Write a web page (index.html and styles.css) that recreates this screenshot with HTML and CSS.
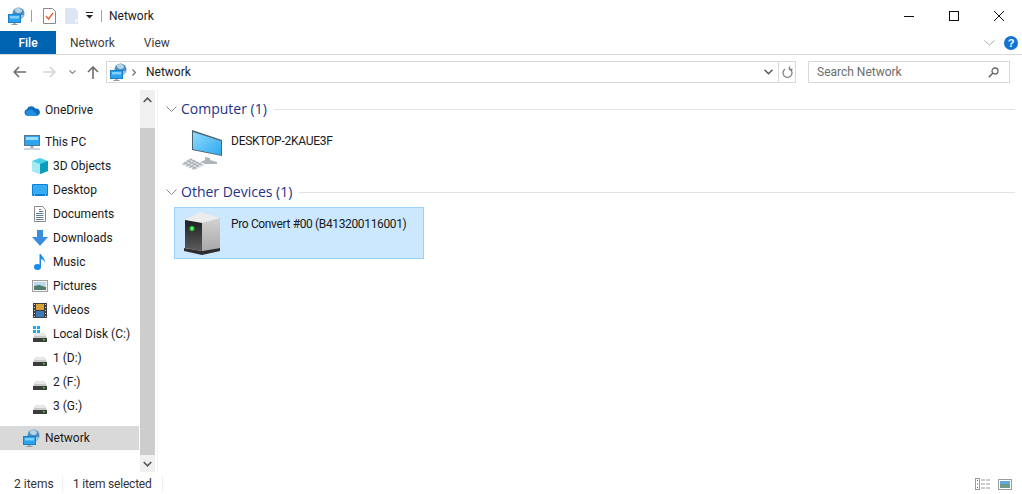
FILE: index.html
```html
<!DOCTYPE html>
<html lang="en">
<head>
<meta charset="utf-8">
<title>Network</title>
<link rel="stylesheet" href="styles.css">
</head>
<body>
<svg class="defs" width="0" height="0">
  <defs>
    <linearGradient id="screen" x1="0" y1="0" x2="1" y2="1">
      <stop offset="0" stop-color="#8fdcfc"/>
      <stop offset="1" stop-color="#2fa8f0"/>
    </linearGradient>
    <linearGradient id="front" x1="0" y1="0" x2="0" y2="1">
      <stop offset="0" stop-color="#1f1f1f"/>
      <stop offset="1" stop-color="#5c5c5c"/>
    </linearGradient>
    <linearGradient id="side" x1="0" y1="0" x2="0" y2="1">
      <stop offset="0" stop-color="#d2d2d2"/>
      <stop offset="1" stop-color="#a8a8a8"/>
    </linearGradient>
  </defs>
  <symbol id="net" viewBox="0 0 18 18">
    <circle cx="11.500" cy="6.500" r="6" fill="#4f8fbe"/>
    <path d="M8 2c2-1.500 5-1.500 6.500 .5s-1 3.500-3 3.500-4.500-2-3.500-4z" fill="#b5d4e8"/>
    <path d="M13 8c2 0 3.500-.5 4.500 .5-1 2.500-3 3.500-4.500 3z" fill="#9cc3dc"/>
    <rect x="1.500" y="7.500" width="12" height="8" fill="#2ba3ef" stroke="#1a7fc4"/>
    <rect x="3" y="9" width="9" height="2.500" fill="#7fd0fa"/>
    <rect x="6.500" y="16" width="2" height="1" fill="#8a9aa6"/>
    <rect x="4.500" y="17" width="6" height="1" fill="#8a9aa6"/>
  </symbol>
  <symbol id="disk" viewBox="0 0 14 9">
    <path d="M2.500 0.500h9L14 5H0z" fill="#c9c9c9"/>
    <path d="M3 1h8l1 2H2z" fill="#e9e9e9"/>
    <rect x="0" y="5" width="14" height="4" fill="#3d3d3d"/>
    <rect x="10" y="6" width="2" height="1.500" fill="#38c24a"/>
  </symbol>
</svg>

<header class="titlebar">
  <svg class="qa-icon" width="18" height="18"><use href="#net"/></svg>
  <span class="qa-sep"></span>
  <svg class="qa-props" width="13" height="16" viewBox="0 0 13 16">
    <path d="M.5.500h9l3 3v12H.5z" fill="#fff" stroke="#8a8a8a"/>
    <path d="M3 8l2.500 3L10 5" fill="none" stroke="#e8602c" stroke-width="1.400"/>
  </svg>
  <svg class="qa-folder" width="13" height="16" viewBox="0 0 13 16">
    <path d="M0 0h10l3 3v13H0z" fill="#dbe5f3"/>
    <path d="M10 11h3v2l-3 3z" fill="#f2f6fb"/>
  </svg>
  <svg class="qa-drop" width="7" height="7" viewBox="0 0 7 7">
    <rect y="0" width="7" height="1" fill="#222"/>
    <path d="M0 3h7L3.500 6.500z" fill="#222"/>
  </svg>
  <span class="qa-sep qa-sep-last"></span>
  <span class="window-title">Network</span>
  <div class="window-controls">
    <svg width="10" height="10" viewBox="0 0 10 10"><path d="M0 5.500h10" stroke="#111"/></svg>
    <svg width="10" height="10" viewBox="0 0 10 10"><rect x=".5" y=".5" width="9" height="9" fill="none" stroke="#111"/></svg>
    <svg width="10" height="10" viewBox="0 0 10 10"><path d="M0 0l10 10M10 0L0 10" stroke="#111"/></svg>
  </div>
</header>

<nav class="ribbon">
  <span class="tab tab-file">File</span>
  <span class="tab tab-network">Network</span>
  <span class="tab tab-view">View</span>
  <div class="ribbon-end">
    <svg width="11" height="6" viewBox="0 0 11 6"><path d="M.5.500l5 4.500 5-4.500" fill="none" stroke="#a9a9a9"/></svg>
    <span class="help">?</span>
  </div>
</nav>

<div class="addressbar">
  <div class="nav-buttons">
    <svg width="13" height="12" viewBox="0 0 13 12"><path d="M6 1L1.200 6 6 11M1.500 6H13" fill="none" stroke="#6d6d6d" stroke-width="1.600"/></svg>
    <svg width="13" height="12" viewBox="0 0 13 12"><path d="M7 1l4.800 5L7 11M11.500 6H0" fill="none" stroke="#d4d4d4" stroke-width="1.600"/></svg>
    <svg width="7" height="5" viewBox="0 0 7 5"><path d="M.5.500l3 3 3-3" fill="none" stroke="#8a8a8a" stroke-width="1.200"/></svg>
    <svg width="12" height="13" viewBox="0 0 12 13"><path d="M1 6l5-5 5 5M6 1.500V13" fill="none" stroke="#6d6d6d" stroke-width="1.600"/></svg>
  </div>
  <div class="path-box">
    <svg class="path-icon" width="18" height="18"><use href="#net"/></svg>
    <svg class="path-chevron" width="4" height="7" viewBox="0 0 4 7"><path d="M.5.500l3 3-3 3" fill="none" stroke="#6d6d6d" stroke-width="1.200"/></svg>
    <span class="path-text">Network</span>
    <svg class="path-drop" width="9" height="6" viewBox="0 0 9 6"><path d="M.5.800l4 4 4-4" fill="none" stroke="#555" stroke-width="1.400"/></svg>
    <span class="path-refresh">
      <svg width="11" height="13" viewBox="0 0 11 13"><path d="M3 3.200a4.500 4.500 0 1 0 5 0M3.500 .5v3h-3" fill="none" stroke="#7d7d7d" stroke-width="1.300" transform="matrix(-1 0 0 1 11 0)"/></svg>
    </span>
  </div>
  <div class="search-box">
    <span>Search Network</span>
    <svg width="11" height="11" viewBox="0 0 11 11"><circle cx="7" cy="4" r="3" fill="none" stroke="#666" stroke-width="1.300"/><path d="M5 6L.8 10.200" stroke="#666" stroke-width="1.600"/></svg>
  </div>
</div>

<div class="content">
  <aside class="sidebar">
    <ul class="tree">
      <li class="row row-top row-gap">
        <svg width="17" height="11" viewBox="0 0 17 11"><path d="M3.500 11A3.500 3.500 0 0 1 3 4.200 5 5 0 0 1 12 3.500 3.800 3.800 0 0 1 14 11z" fill="#0f6cbd"/><path d="M3 11a3 3 0 0 1 1-5.500C6 4 9 4 10 6l5 5z" fill="#1f8fe0"/></svg>
        <span>OneDrive</span>
      </li>
      <li class="row row-top">
        <svg width="16" height="15" viewBox="0 0 16 15"><rect x=".5" y=".5" width="15" height="10" fill="#2ba3ef" stroke="#4d7c9a"/><rect x="2" y="2" width="12" height="3" fill="#9bdcfb"/><rect x="6.500" y="11" width="3" height="2" fill="#9aa7b0"/><rect x="0" y="13.500" width="16" height="1" fill="#a3adb5"/></svg>
        <span>This PC</span>
      </li>
      <li class="row row-sub">
        <svg width="16" height="16" viewBox="0 0 16 16"><path d="M8 0l8 3v10l-8 3-8-3V3z" fill="#49d0e6"/><path d="M8 6v10l8-3V3z" fill="#0a9cb8"/><path d="M0 3l8 3v10l-8-3z" fill="#a8eaf2"/></svg>
        <span>3D Objects</span>
      </li>
      <li class="row row-sub">
        <svg width="16" height="12" viewBox="0 0 16 12"><rect width="16" height="12" rx="1" fill="#0e7fd8"/><rect x="1" y="1" width="14" height="9" fill="#36adf3"/><rect x="2" y="10.500" width="1" height="1" fill="#cfeaff"/><rect x="13" y="10.500" width="1" height="1" fill="#cfeaff"/></svg>
        <span>Desktop</span>
      </li>
      <li class="row row-sub">
        <svg width="12" height="16" viewBox="0 0 12 16"><path d="M.5.500h8l3 3v12H.5z" fill="#fff" stroke="#8a8a8a"/><path d="M5 3.500h2M5 5.500h4.500M2 7.500h7.500M2 9.500h7.500M2 11.500h7.500M2 13.500h7.500" stroke="#5d7d98"/></svg>
        <span>Documents</span>
      </li>
      <li class="row row-sub">
        <svg width="16" height="16" viewBox="0 0 16 16"><path d="M5 0h6v7h5l-8 9-8-9h5z" fill="#3a8ee0"/></svg>
        <span>Downloads</span>
      </li>
      <li class="row row-sub">
        <svg width="14" height="16" viewBox="0 0 14 16"><ellipse cx="4.500" cy="13" rx="3.500" ry="3" fill="#1a8be8"/><path d="M6.500 0h1.500c.5 3 4.500 4 4 9-.5-2.500-2-3.500-4-4v8H6.500z" fill="#1a8be8"/></svg>
        <span>Music</span>
      </li>
      <li class="row row-sub">
        <svg width="16" height="12" viewBox="0 0 16 12"><rect x=".5" y=".5" width="15" height="11" fill="#f5f5f5" stroke="#a0a0a0"/><rect x="2" y="2" width="12" height="4" fill="#bcd9ec"/><path d="M2 6l5-1 7 2v3H2z" fill="#4f7e6f"/></svg>
        <span>Pictures</span>
      </li>
      <li class="row row-sub">
        <svg width="14" height="15" viewBox="0 0 14 15"><rect width="14" height="15" fill="#3d3d3d"/><rect x="3" y="1" width="8" height="6" fill="#d7a23a"/><rect x="3" y="8" width="8" height="6" fill="#3f78b8"/><path d="M1 1h1v1H1zM1 4h1v1H1zM1 7h1v1H1zM1 10h1v1H1zM1 13h1v1H1zM12 1h1v1h-1zM12 4h1v1h-1zM12 7h1v1h-1zM12 10h1v1h-1zM12 13h1v1h-1z" fill="#ddd"/></svg>
        <span>Videos</span>
      </li>
      <li class="row row-sub">
        <svg width="14" height="16" viewBox="0 0 14 16"><g fill="#19a9f0"><rect x="0" y="0" width="3" height="3"/><rect x="4" y="0" width="3" height="3"/><rect x="0" y="4" width="3" height="3"/><rect x="4" y="4" width="3" height="3"/></g><use href="#disk" y="7" width="14" height="9"/></svg>
        <span>Local Disk (C:)</span>
      </li>
      <li class="row row-sub">
        <svg class="disk" width="14" height="9"><use href="#disk"/></svg>
        <span>1 (D:)</span>
      </li>
      <li class="row row-sub">
        <svg class="disk" width="14" height="9"><use href="#disk"/></svg>
        <span>2 (F:)</span>
      </li>
      <li class="row row-sub row-gap">
        <svg class="disk" width="14" height="9"><use href="#disk"/></svg>
        <span>3 (G:)</span>
      </li>
      <li class="row row-top row-current">
        <svg width="18" height="18"><use href="#net"/></svg>
        <span>Network</span>
      </li>
    </ul>
    <div class="scrollbar">
      <svg width="9" height="6" viewBox="0 0 9 6"><path d="M.7 5l3.800-3.800L8.300 5" fill="none" stroke="#555" stroke-width="1.600"/></svg>
      <div class="thumb"></div>
      <svg width="9" height="6" viewBox="0 0 9 6"><path d="M.7 1l3.800 3.800L8.300 1" fill="none" stroke="#555" stroke-width="1.600"/></svg>
    </div>
  </aside>

  <main class="files">
    <section class="group">
      <h2 class="group-head">
        <svg width="11" height="6" viewBox="0 0 11 6"><path d="M.5.500l5 5 5-5" fill="none" stroke="#8a8a8a"/></svg>
        <span>Computer (1)</span>
        <i class="rule"></i>
      </h2>
      <div class="item">
        <svg class="item-icon" width="44" height="42" viewBox="0 0 44 42">
          <path d="M12 0l30 10v16l-30-6z" fill="#4a6272"/>
          <path d="M13 2l28 9v14L13 19.200z" fill="url(#screen)"/>
          <path d="M25 27l5 1v2l7 2v2H25l-5-2 5-2z" fill="#aeb6bb"/>
          <path d="M1 34l9-6 15 7-10 5z" fill="#dfe3e5"/>
          <path d="M4 32.500l12 6M7 30.500l12 6M10 29l12 6M3 35l9-6M6 36.500l9-6M9 38l9-6M12 39.500l9-6" stroke="#8f979d" stroke-width=".700"/>
        </svg>
        <span class="item-name item-name-pc">DESKTOP-2KAUE3F</span>
      </div>
    </section>
    <section class="group">
      <h2 class="group-head">
        <svg width="11" height="6" viewBox="0 0 11 6"><path d="M.5.500l5 5 5-5" fill="none" stroke="#8a8a8a"/></svg>
        <span>Other Devices (1)</span>
        <i class="rule"></i>
      </h2>
      <div class="item item-selected">
        <svg class="item-icon-device" width="36" height="46" viewBox="0 0 36 46">
          <path d="M1 10L16 2l20 6-18 5z" fill="#ececec"/>
          <path d="M18 13l18-5v30l-18 3z" fill="url(#side)"/>
          <path d="M1 10l17 3v28L1 38z" fill="url(#front)"/>
          <circle cx="8" cy="18.500" r="2.500" fill="#1ccf3a"/>
          <circle cx="8" cy="18.500" r="1.200" fill="#7dff8a"/>
          <path d="M0 38l18 3 18-3v3l-18 4-18-4z" fill="#2e2e2e"/>
        </svg>
        <span class="item-name">Pro Convert #00 (B413200116001)</span>
      </div>
    </section>
  </main>
</div>

<footer class="statusbar">
  <span class="status-count">2 items</span>
  <span class="status-selected">1 item selected</span>
  <div class="view-switch">
    <svg width="16" height="12" viewBox="0 0 16 12"><rect x=".5" y=".5" width="4" height="11" fill="none" stroke="#9a9a9a"/><path d="M2 2h1v1H2zM2 5.500h1v1H2z" fill="#555"/><path d="M2 9h1v1H2z" fill="#b03030"/><path d="M6 2h4M11 2h4M6 6h4M11 6h4M6 10h4M11 10h4" stroke="#9a9a9a" stroke-width="1.200"/></svg>
    <svg width="14" height="11" viewBox="0 0 14 11"><rect x=".5" y=".5" width="13" height="10" fill="#fff" stroke="#9a9a9a" stroke-width="1"/><rect x="2" y="2" width="10" height="3" fill="#5da6e0"/><rect x="2" y="5" width="10" height="4" fill="#6f9a86"/></svg>
  </div>
</footer>
</body>
</html>
```

FILE: styles.css
```css
* { box-sizing: border-box; }
html, body { height: 100%; }
body {
  margin: 0;
  height: 494px;
  width: 1022px;
  overflow: hidden;
  display: flex;
  flex-direction: column;
  background: #fff;
  color: #1a1a1a;
  font: 12px/16px Roboto, "Open Sans", sans-serif;
}
svg { display: block; flex: none; }
.defs { position: absolute; }

/* title bar */
.titlebar {
  height: 31px;
  display: flex;
  align-items: center;
  padding-left: 7px;
}
.qa-sep { width: 1px; height: 12px; background: #a0a0a0; margin-left: 6px; }
.qa-props { margin-left: 11px; }
.qa-folder { margin-left: 9px; }
.qa-drop { margin-left: 8px; }
.qa-sep-last { margin-left: 8px; }
.window-title { margin-left: 7px; }
.window-controls {
  margin-left: auto;
  display: flex;
  gap: 35px;
  padding-right: 18px;
}

/* ribbon */
.ribbon {
  height: 24px;
  display: flex;
  align-items: center;
  border-bottom: 1px solid #dadada;
  color: #3c3c3c;
}
.tab { display: block; }
.tab-file {
  width: 56px;
  height: 23px;
  background: #0063b1;
  color: #fff;
  text-align: center;
  line-height: 25px;
  font-weight: 500;
}
.tab-network { margin-left: 14px; }
.tab-view { margin-left: 29px; }
.ribbon-end {
  margin-left: auto;
  display: flex;
  align-items: center;
  gap: 9px;
  padding-right: 4px;
}
.help {
  width: 14px;
  height: 14px;
  border-radius: 50%;
  background: #1173d4;
  color: #fff;
  text-align: center;
  font: bold 11px/14px "Liberation Sans", sans-serif;
}

/* address bar */
.addressbar {
  height: 35px;
  display: flex;
  align-items: center;
  padding: 0 12px 1px 13px;
}
.nav-buttons { display: flex; align-items: center; width: 93px; }
.nav-buttons svg:nth-child(2) { margin-left: 17px; }
.nav-buttons svg:nth-child(3) { margin-left: 13px; }
.nav-buttons svg:nth-child(4) { margin-left: 11px; }
.path-box, .search-box {
  height: 22px;
  border: 1px solid #d9d9d9;
  display: flex;
  align-items: center;
}
.path-box { width: 690px; padding-left: 2px; }
.path-chevron { margin-left: 5px; }
.path-text { margin-left: 10px; }
.path-drop { margin-left: auto; margin-right: 5px; }
.path-refresh {
  width: 17px;
  height: 20px;
  border-left: 1px solid #d9d9d9;
  display: flex;
  align-items: center;
  justify-content: center;
}
.search-box {
  width: 202px;
  margin-left: 12px;
  padding: 0 10px 0 8px;
  justify-content: space-between;
  color: #6d6d6d;
}

/* main area */
.content { flex: 1; display: flex; min-height: 0; }
.sidebar {
  width: 158px;
  display: flex;
  border-right: 1px solid #f3f3f3;
}
.tree {
  list-style: none;
  margin: 0 1px 0 0;
  padding: 8px 0 0;
  width: 139px;
}
.row {
  height: 24px;
  display: flex;
  align-items: center;
  white-space: nowrap;
}
.row-gap { margin-bottom: 8px; }
.row-top { padding-left: 24px; gap: 5px; }
.row-top svg { width: 16px; }
.row-sub { padding-left: 32px; gap: 5px; }
.row-sub svg { width: 16px; }
.row-sub .disk { margin-top: 6px; }
.row-current { background: #d9d9d9; padding-left: 22px; gap: 5px; }
.row-current svg { width: 18px; }
.scrollbar {
  width: 15px;
  height: 382px;
  background: #f0f0f0;
  display: flex;
  flex-direction: column;
  align-items: center;
  padding-top: 7px;
}
.thumb {
  width: 15px;
  height: 327px;
  margin-top: 25px;
  background: #cdcdcd;
}
.scrollbar svg:last-child { margin-top: 6px; }

.files { flex: 1; padding: 8px 7px 0 8px; }
.group-head {
  margin: 0;
  height: 22px;
  display: flex;
  align-items: center;
  font: 400 14px/22px "Open Sans", sans-serif;
  color: #1e3287;
}
.group-head span { margin-left: 4px; }
.rule { flex: 1; height: 1px; background: #e2e2e2; margin-left: 7px; }
.item {
  width: 250px;
  height: 52px;
  margin-left: 8px;
  display: flex;
  align-items: flex-start;
  border: 1px solid transparent;
}
.group:first-child .item { margin-top: 9px; }
.item-icon { margin-left: 5px; }
.item-icon-device { margin: 2px 0 0 9px; }
.item-name { margin: 3px 0 0 7px; }
.item-name-pc { letter-spacing: -.25px; }
.item-selected { background: #cce8ff; border-color: #99d1ff; margin-top: 4px; }
.item-selected .item-name { margin: 8px 0 0 11px; letter-spacing: -.36px; }

/* status bar */
.statusbar {
  height: 22px;
  display: flex;
  align-items: center;
  padding: 2px 10px 0 14px;
  color: #333;
}
.status-count { width: 49px; border-right: 1px solid #efefef; }
.status-selected { margin-left: 10px; width: 90px; border-right: 1px solid #efefef; letter-spacing: -.2px; }
.view-switch { margin-left: auto; display: flex; align-items: center; gap: 7px; }
```
